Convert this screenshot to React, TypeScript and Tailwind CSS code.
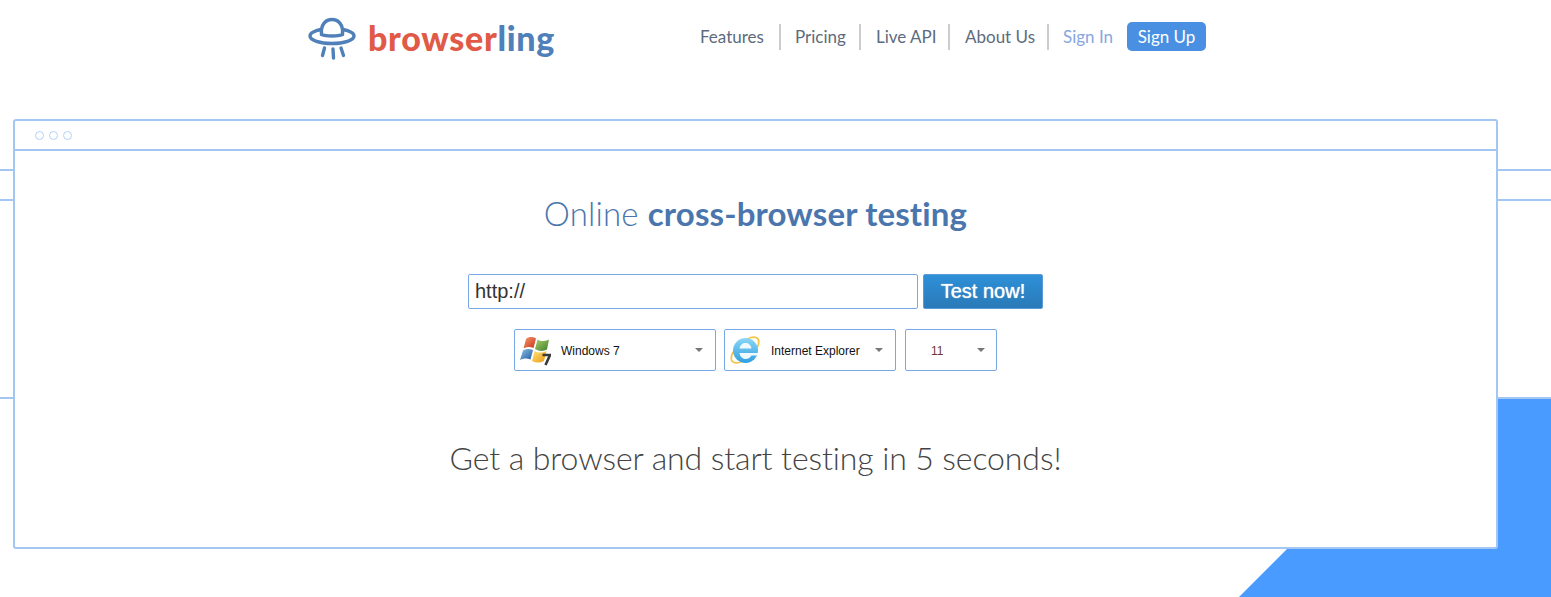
const navLinks = [
  { label: "Features", width: "w-[96px]", pad: "pl-[15px]" },
  { label: "Pricing", width: "w-[80px]", pad: "pl-[14px]" },
  { label: "Live API", width: "w-[89px]", pad: "pl-[15px]" },
  { label: "About Us", width: "w-[99px]", pad: "pl-[15px]" },
];

function UfoLogo() {
  return (
    <svg width="50" height="44" viewBox="0 0 50 44" fill="none" stroke="#4f80b9" strokeWidth="3.4" strokeLinecap="round">
      <ellipse cx="25" cy="20" rx="22" ry="7.5" />
      <path d="M14.5 18.5 C13.5 8 19 3.5 25 3.5 C31 3.5 36.5 8 35.5 18.5 C31 20.5 19 20.5 14.5 18.5 Z" fill="#fff" />
      <path d="M17.5 32 L15.5 39.5" />
      <path d="M26 33 L26.5 42" />
      <path d="M34 32 L36.5 39.5" />
    </svg>
  );
}

function WindowsIcon() {
  return (
    <svg width="32" height="32" viewBox="0 0 32 32">
      <defs>
        <linearGradient id="winRed" x1="0" y1="0" x2="1" y2="1">
          <stop offset="0" stopColor="#f59a6a" />
          <stop offset="1" stopColor="#c8321c" />
        </linearGradient>
        <linearGradient id="winGreen" x1="0" y1="0" x2="1" y2="1">
          <stop offset="0" stopColor="#a9cf6a" />
          <stop offset="1" stopColor="#3f7f2a" />
        </linearGradient>
        <linearGradient id="winBlue" x1="0" y1="0" x2="1" y2="1">
          <stop offset="0" stopColor="#8fc0e8" />
          <stop offset="1" stopColor="#1f5c9c" />
        </linearGradient>
        <linearGradient id="winYellow" x1="0" y1="0" x2="1" y2="1">
          <stop offset="0" stopColor="#fde27a" />
          <stop offset="1" stopColor="#ef9a12" />
        </linearGradient>
      </defs>
      <path d="M7 5 C10 2.5 13 2.5 17 4.5 L14.5 14 C11 12.5 8 12.5 4.5 14.5 Z" fill="url(#winRed)" />
      <path d="M18.5 5.5 C22 7.5 26 7.5 30 5.5 L28 15.5 C24.5 17.5 20 17.5 16 15 Z" fill="url(#winGreen)" />
      <path d="M4 16.5 C7 14.5 10.5 14.5 14 16 L11.5 25.5 C8 24 5 24 1 26 Z" fill="url(#winBlue)" />
      <path d="M15.5 17 C19 19 23 19 27.5 17 L25 27 C21 29 17 29 13 27 Z" fill="url(#winYellow)" />
      <path d="M23.5 21 H31 L26.5 31" fill="none" stroke="#3a3a3a" strokeWidth="2.6" />
    </svg>
  );
}

function IeIcon() {
  return (
    <svg width="32" height="32" viewBox="0 0 32 32">
      <defs>
        <linearGradient id="ieBlue" x1="0" y1="0" x2="0" y2="1">
          <stop offset="0" stopColor="#8ad6f6" />
          <stop offset="1" stopColor="#2f9fe0" />
        </linearGradient>
      </defs>
      <ellipse cx="16" cy="16" rx="17" ry="8" fill="none" stroke="#f4c44a" strokeWidth="1.8" transform="rotate(-42 16 16)" />
      <circle cx="16.5" cy="16.5" r="12.5" fill="url(#ieBlue)" />
      <path d="M10.5 14.5 C11 11 13.5 9 16.5 9 C19.5 9 22 11 22.5 14.5 Z" fill="#eefaff" />
      <path d="M10.5 19 C11 22.5 13.5 25 16.5 25 C19 25 21 24 22.5 21.5 H29 V19 Z" fill="#eefaff" />
    </svg>
  );
}

function Caret() {
  return <span className="h-0 w-0 border-x-[4px] border-t-[4px] border-x-transparent border-t-[#777]" />;
}

function OsSelect({ width, icon, label, labelClass, caretClass }: { width: string; icon?: React.ReactNode; label: string; labelClass: string; caretClass: string }) {
  return (
    <div className={`relative flex h-[42px] ${width} items-center rounded-[2px] border border-[#78a9e6] bg-white`}>
      {icon && <span className="absolute left-[4px] top-[4px]">{icon}</span>}
      <span className={`${labelClass} pt-[2px] font-['Liberation_Sans',sans-serif] text-[12px]`}>{label}</span>
      <span className={`ml-auto flex ${caretClass}`}>
        <Caret />
      </span>
    </div>
  );
}

export default function App() {
  return (
    <div className="relative h-[597px] w-[1551px] overflow-hidden bg-white">
      {/* background stripes behind the window */}
      <div className="absolute left-0 top-[169px] h-[2px] w-full bg-[#a3c6f2]" />
      <div className="absolute left-0 top-[199px] h-[2px] w-full bg-[#a3c6f2]" />
      <div className="absolute left-0 top-[397px] h-[2px] w-full bg-[#a3c6f2]" />
      <div className="absolute bottom-0 left-[1239px] right-0 top-[399px] bg-[#4a9bff] [clip-path:polygon(100%_0,100%_100%,0_100%,198px_0)]" />

      <div className="relative">
        <header className="flex h-[72px] items-start">
          <div className="ml-[307px] mt-[16px] flex w-[250px] items-center">
            <UfoLogo />
            <span className="ml-[11px] whitespace-nowrap font-['Lato',sans-serif] text-[34px] font-black leading-[40px] tracking-[0.7px]">
              <span className="text-[#e05a47]">browser</span>
              <span className="text-[#4f80b9]">ling</span>
            </span>
          </div>
          <nav className="ml-[128px] mt-[22px] flex items-center font-['Lato',sans-serif] text-[17px]">
            {navLinks.map((link) => (
              <a key={link.label} className={`flex h-[26px] ${link.width} ${link.pad} items-center border-r-2 border-[#cccccc] text-[#5d6b7c]`}>
                {link.label}
              </a>
            ))}
            <a className="flex h-[26px] w-[78px] items-center pl-[14px] text-[#87a6e0]">Sign In</a>
            <a className="flex h-[29px] w-[79px] items-center justify-center rounded-[5px] bg-[#4a90e2] text-white">Sign Up</a>
          </nav>
        </header>

        <main className="mx-[13px] mt-[47px] h-[430px] w-[1485px] rounded-[3px] border-2 border-[#a3c6f2] bg-white">
          <div className="flex h-[30px] items-center gap-[5px] border-b-2 border-[#a3c6f2] pl-[20px]">
            <span className="h-[9px] w-[9px] rounded-full border border-[#b5d2f5]" />
            <span className="h-[9px] w-[9px] rounded-full border border-[#b5d2f5]" />
            <span className="h-[9px] w-[9px] rounded-full border border-[#b5d2f5]" />
          </div>

          <div className="flex flex-col items-center">
            <h1 className="mt-[42px] font-['Lato',sans-serif] text-[33px] font-light leading-[40px] tracking-[0.15px] text-[#4a76ad]">
              Online <span className="font-bold">cross-browser testing</span>
            </h1>

            <div className="mt-[41px] flex gap-[5px] font-['Liberation_Sans',sans-serif]">
              <div className="flex h-[35px] w-[450px] items-center rounded-[2px] border border-[#78a9e6] pb-[2px] pl-[6px] text-[20px] text-[#333]">http://</div>
              <button className="h-[35px] w-[120px] rounded-[2px] border border-[#5b9bd5] bg-gradient-to-b from-[#2e90d8] to-[#2a7ab8] pb-[2px] text-[20px] text-white [text-shadow:0_0_1px_#fff]">Test now!</button>
            </div>

            <div className="mt-[20px] flex gap-[8px]">
              <OsSelect width="w-[202px]" icon={<WindowsIcon />} label="Windows 7" labelClass="ml-[46px] text-[#111]" caretClass="mr-[12px]" />
              <OsSelect width="w-[172px]" icon={<IeIcon />} label="Internet Explorer" labelClass="ml-[46px] text-[#111]" caretClass="mr-[12px]" />
              <div className="ml-[1px]">
                <OsSelect width="w-[92px]" label="11" labelClass="ml-[25px] text-[#6a3a30]" caretClass="mr-[11px]" />
              </div>
            </div>

            <p className="mt-[67px] font-['Lato',sans-serif] text-[32px] font-light leading-[40px] tracking-[-0.1px] text-[#444]">Get a browser and start testing in 5 seconds!</p>
          </div>
        </main>
      </div>
    </div>
  );
}
